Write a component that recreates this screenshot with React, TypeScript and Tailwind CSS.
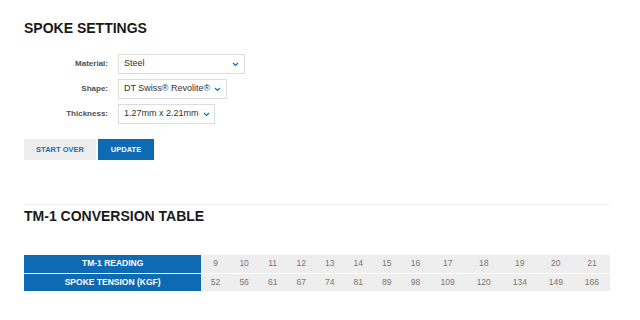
import React from 'react'

const FIELDS = [
  { label: 'Material:', value: 'Steel', width: 'w-[127px]' },
  { label: 'Shape:', value: 'DT Swiss® Revolite®', width: 'w-[109px]' },
  { label: 'Thickness:', value: '1.27mm x 2.21mm', width: 'w-[97px]' },
]

const READINGS = [9, 10, 11, 12, 13, 14, 15, 16, 17, 18, 19, 20, 21]
const TENSIONS = [52, 56, 61, 67, 74, 81, 89, 98, 109, 120, 134, 149, 166]

function Chevron() {
  return (
    <svg width="7" height="5" viewBox="0 0 7 5" className="shrink-0">
      <polyline points="1,1 3.5,3.5 6,1" fill="none" stroke="#1a6bb3" strokeWidth="1.2" />
    </svg>
  )
}

export default function App() {
  return (
    <div className="w-[640px] h-[320px] bg-white px-6 pt-5 font-['Liberation_Sans',Arial,sans-serif] overflow-hidden">
      <h1 className="text-[14px] leading-4 font-bold text-[#1a1a1a]">SPOKE SETTINGS</h1>

      {/* form */}
      <div className="mt-[18px] flex flex-col gap-[5px]">
        {FIELDS.map(f => (
          <div key={f.label} className="flex items-center h-5">
            <label className="w-[84px] text-right text-[8px] font-bold text-[#505050]">{f.label}</label>
            <div
              className={`ml-[10px] h-5 ${f.width} border border-[#dcdcdc] bg-white flex items-center justify-between gap-1 pl-[5px] pr-[5px]`}
            >
              <span className="text-[9px] text-[#333] whitespace-nowrap">{f.value}</span>
              <Chevron />
            </div>
          </div>
        ))}
      </div>

      <div className="mt-[15px] flex gap-[2px]">
        <button className="h-[21px] w-[72px] bg-[#eeeeee] text-[7.5px] font-bold text-[#1a6bb3]">
          START OVER
        </button>
        <button className="h-[21px] w-[56px] bg-[#0f6ab4] text-[7.5px] font-bold text-white">
          UPDATE
        </button>
      </div>

      <div className="mt-[44px] w-[586px] h-px bg-[#f0f0f0]" />

      <h2 className="mt-[3px] text-[14px] leading-4 font-bold text-[#1a1a1a]">TM-1 CONVERSION TABLE</h2>

      <table className="mt-[31px] w-[586px] table-fixed border-collapse">
        <colgroup>
          <col className="w-[177px]" />
          {READINGS.map((r, i) => (
            <col key={r} className={i < 8 ? 'w-[28.5px]' : 'w-[36px]'} />
          ))}
        </colgroup>
        <tbody>
          <tr className="h-[18px] border-b border-white">
            <th className="bg-[#0f6ab4] text-white text-[8.5px] font-bold text-center p-0">TM-1 READING</th>
            {READINGS.map(r => (
              <td key={r} className="bg-[#eeeeee] text-[8.5px] text-[#777] text-center p-0">{r}</td>
            ))}
          </tr>
          <tr className="h-[18px]">
            <th className="bg-[#0f6ab4] text-white text-[8.5px] font-bold text-center p-0">SPOKE TENSION (KGF)</th>
            {TENSIONS.map((t, i) => (
              <td key={i} className="bg-[#eeeeee] text-[8.5px] text-[#777] text-center p-0">{t}</td>
            ))}
          </tr>
        </tbody>
      </table>
    </div>
  )
}
